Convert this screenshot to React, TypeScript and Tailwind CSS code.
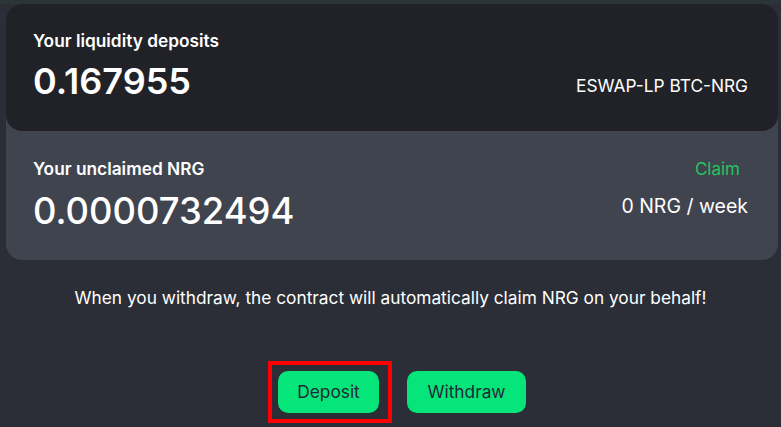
import React from 'react';

export default function App() {
  return (
    <div className="w-[781px] h-[427px] overflow-hidden bg-[#2b2e36] font-['Inter',sans-serif]">
      <div className="h-[4px] bg-[#2c3437]" />
      <div className="ml-[6px] mr-[3px] rounded-2xl bg-[#40444f]">
        <div className="h-[127px] rounded-2xl bg-[#212227] pl-[27px] pr-[30px] pt-[25px] flex justify-between">
          <div className="flex flex-col">
            <span className="text-[17.3px] leading-6 font-semibold text-white">Your liquidity deposits</span>
            <span className="text-4xl leading-10 font-semibold text-white mt-[8px]">0.167955</span>
          </div>
          <div className="self-start mt-[43px] text-[17.3px] leading-7 text-white">ESWAP-LP BTC-NRG</div>
        </div>
        <div className="h-[129px] pl-[27px] pr-[30px] pt-[26px] flex justify-between">
          <div className="flex flex-col">
            <span className="text-[17.3px] leading-6 font-semibold text-white">Your unclaimed NRG</span>
            <span className="text-[36.4px] leading-10 font-medium text-white mt-[10px]">0.0000732494</span>
          </div>
          <div className="flex flex-col items-end -mt-[2px]">
            <button className="text-[17px] leading-7 text-[#22c55e] pr-[8px]">Claim</button>
            <span className="text-[19.5px] leading-7 text-white mt-[9px]">0 NRG / week</span>
          </div>
        </div>
      </div>
      <p className="mt-[26px] text-center text-[17.3px] leading-6 text-white">
        When you withdraw, the contract will automatically claim NRG on your behalf!
      </p>
      <div className="mt-[51px] flex justify-center items-center gap-[15px] pl-[13px]">
        <div className="border-4 border-[#ff0000] pt-[6px] pb-[6px] pl-[6px] pr-[9px]">
          <button className="h-[42px] w-[101px] rounded-[10px] bg-[#06e57a] text-[17.3px] text-[#1f2937]">Deposit</button>
        </div>
        <button className="h-[42px] w-[119px] rounded-[10px] bg-[#06e57a] text-[17.3px] text-[#1f2937]">Withdraw</button>
      </div>
    </div>
  );
}
